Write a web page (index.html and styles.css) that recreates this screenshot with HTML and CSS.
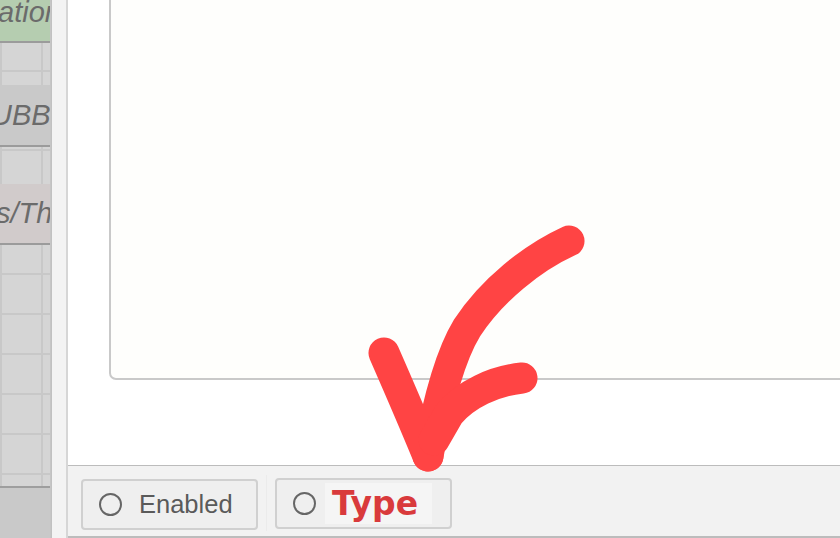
FILE: index.html
```html
<!DOCTYPE html>
<html>
<head>
<meta charset="utf-8">
<link rel="stylesheet" href="styles.css">
</head>
<body>
<div class="page">
  <div class="strip">
    <div class="row row-green"><span class="frag frag-1">ation</span></div>
    <div class="grid grid-a"><div class="cell c29"></div><div class="cell c13"></div></div>
    <div class="row row-gray"><span class="frag frag-2">UBB</span></div>
    <div class="grid grid-b"><div class="cell c3"></div><div class="cell c32"></div></div>
    <div class="row row-pink"><span class="frag frag-3">s/The</span></div>
    <div class="grid grid-c">
      <div class="cell c30"></div><div class="cell c40"></div><div class="cell c40"></div><div class="cell c40"></div><div class="cell c40"></div><div class="cell c40"></div><div class="cell c11"></div>
    </div>
    <div class="strip-bottom"></div>
  </div>
  <div class="gutter"></div>
  <div class="panel">
    <div class="content">
      <div class="textbox"></div>
    </div>
    <div class="footer">
      <button class="opt opt-enabled"><span class="radio"></span><span class="label">Enabled</span></button>
      <div class="sep"></div>
      <button class="opt opt-type"><span class="radio"></span><span class="hl"><span class="label-type">Type</span></span></button>
    </div>
  </div>
  <svg class="arrow" width="840" height="538" viewBox="0 0 840 538">
    <path d="M569 241 C532 258 492 290 467 328 C450 356 438 400 428 456" />
    <path d="M384 353 C398 385 414 422 428 456" />
    <path d="M522 378 C494 381 466 394 449 414 L434 440" />
  </svg>
</div>
</body>
</html>
```

FILE: styles.css
```css
html, body {
  margin: 0;
  padding: 0;
  width: 840px;
  height: 538px;
  overflow: hidden;
  background: #ffffff;
}

.page {
  position: relative;
  display: flex;
  width: 840px;
  height: 538px;
}

.strip {
  width: 52px;
  flex: none;
  display: flex;
  flex-direction: column;
  background: #d4d4d4;
  box-shadow: inset -3px 0 3px -1px rgba(0, 0, 0, 0.10);
  font-family: "Liberation Sans", Arial, sans-serif;
  font-style: italic;
  font-size: 29px;
  color: #6b6b6b;
}

.row {
  overflow: hidden;
  white-space: nowrap;
  border-bottom: 2px solid #9b9b9b;
  box-sizing: border-box;
  margin-right: 2px;
}

.row-green {
  height: 43px;
  line-height: 24px;
  background: #b5cdb0;
}

.row-gray {
  height: 62px;
  line-height: 60px;
  background: #c9c9c9;
}

.row-pink {
  height: 61px;
  line-height: 58px;
  background: #d1cbcb;
}

.frag { display: inline-block; }
.frag-1 { margin-left: -2px; }
.frag-2 { margin-left: -9px; }
.frag-3 { margin-left: -4px; }

.grid {
  margin-right: 2px;
  background-color: #d5d5d5;
  background-image:
    linear-gradient(#c8c8c8, #c8c8c8),
    linear-gradient(#c8c8c8, #c8c8c8);
  background-size: 2px 100%, 2px 100%;
  background-position: 0 0, 41px 0;
  background-repeat: no-repeat;
}

.cell {
  box-sizing: border-box;
  border-bottom: 2px solid #c8c8c8;
}
.cell:last-child { border-bottom: none; }
.c29 { height: 29px; }
.c13 { height: 13px; }
.c3 { height: 4px; }
.c32 { height: 33px; }
.c30 { height: 30px; }
.c40 { height: 40px; }
.c11 { height: 11px; }

.grid-c .cell:last-child {
  border-bottom: 2px solid #9e9e9e;
  height: 13px;
}

.strip-bottom {
  flex: 1;
  margin-right: 2px;
  background: #c9c9c9;
}

.gutter {
  width: 14px;
  flex: none;
  background: #f3f3f3;
  border-right: 2px solid #d6d6d6;
}

.panel {
  flex: 1;
  display: flex;
  flex-direction: column;
  background: #ffffff;
  min-width: 0;
}

.content {
  height: 465px;
  flex: none;
  overflow: hidden;
}

.textbox {
  margin-top: -20px;
  margin-left: 41px;
  margin-right: -20px;
  height: 400px;
  box-sizing: border-box;
  border: 2px solid #c9c9c9;
  border-radius: 7px;
  background: #fefefc;
}

.footer {
  flex: 1;
  display: flex;
  align-items: flex-start;
  background: #f2f2f2;
  border-top: 1px solid #bcbcbc;
  border-bottom: 2px solid #bcbcbc;
  padding: 12px 0 0 13px;
}

.opt {
  display: flex;
  align-items: center;
  width: 177px;
  height: 51px;
  box-sizing: border-box;
  margin: 0;
  padding: 0 0 0 16px;
  border: 2px solid #d0d0d0;
  border-radius: 4px;
  background: #efefef;
  font: inherit;
}

.opt-enabled { margin-top: 1px; }

.sep {
  width: 1px;
  height: 56px;
  margin: -3px 8px 0 8px;
  background: #ebebeb;
}

.radio {
  width: 19px;
  height: 19px;
  flex: none;
  border: 2px solid #666666;
  border-radius: 50%;
}

.label {
  margin-left: 17px;
  font-family: "Liberation Sans", Arial, sans-serif;
  font-size: 25.5px;
  color: #5a5a5a;
}

.hl {
  display: flex;
  align-items: center;
  margin-left: 9px;
  width: 107px;
  height: 41px;
  padding-left: 7px;
  box-sizing: border-box;
  background: #f5f5f5;
}

.label-type {
  font-family: "DejaVu Sans", Verdana, sans-serif;
  font-weight: bold;
  font-size: 33px;
  color: #d93a3c;
  line-height: 1;
}

.arrow {
  position: absolute;
  left: 0;
  top: 0;
  pointer-events: none;
}

.arrow path {
  fill: none;
  stroke: #ff4444;
  stroke-width: 31;
  stroke-linecap: round;
  stroke-linejoin: round;
}
```
